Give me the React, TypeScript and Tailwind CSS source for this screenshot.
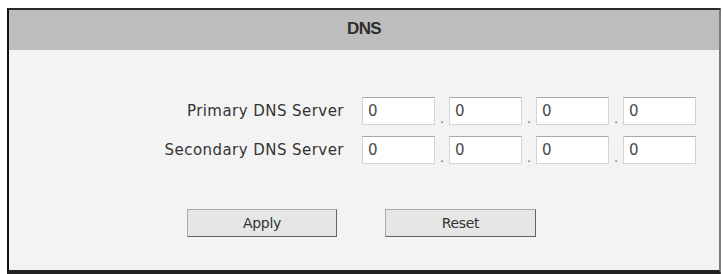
import React from "react";

const ROWS = [
  { label: "Primary DNS Server", values: ["0", "0", "0", "0"] },
  { label: "Secondary DNS Server", values: ["0", "0", "0", "0"] },
];

function IpInput({ values }: { values: string[] }) {
  return (
    <div className="flex items-end">
      {values.map((v, i) => (
        <React.Fragment key={i}>
          {i > 0 && (
            <span className="w-[14px] text-center text-[13px] leading-[12px] text-[#666]">.</span>
          )}
          <input
            defaultValue={v}
            className="h-[28px] w-[73px] border border-[#d4d4d4] border-t-[#a9a9a9] bg-white px-[5px] text-[15px] text-[#4a4a4a] outline-none"
          />
        </React.Fragment>
      ))}
    </div>
  );
}

export default function App() {
  return (
    <div className="h-[274px] w-[723px] bg-white pl-[7px] pt-[8px] font-['DejaVu_Sans',Verdana,sans-serif]">
      <div className="flex h-[266px] w-[714px] flex-col border-l-2 border-r-2 border-t-2 border-b-4 border-l-[#111] border-r-[#7a7a7a] border-t-[#2a2a2a] border-b-[#222] bg-[#f3f3f3]">
        {/* header */}
        <div className="flex h-[40px] items-center justify-center bg-[#bdbdbd] pb-[2px] font-['Liberation_Sans',Arial,sans-serif] text-[17px] font-bold tracking-[-0.6px] text-[#2e2e2e]">
          DNS
        </div>

        {/* address rows */}
        <div className="mt-[47px] flex flex-col gap-[11px]">
          {ROWS.map((row) => (
            <div key={row.label} className="flex items-center">
              <span className="w-[353px] pr-[18px] text-right text-[15px] tracking-[0.45px] text-[#333]">{row.label}</span>
              <IpInput values={row.values} />
            </div>
          ))}
        </div>

        {/* buttons */}
        <div className="mt-[45px] flex gap-[48px] pl-[178px]">
          <button className="h-[28px] w-[150px] border border-[#aaa] border-b-[#666] border-r-[#666] bg-[#e6e6e6] text-[14px] tracking-[-0.3px] text-[#333]">
            Apply
          </button>
          <button className="h-[28px] w-[151px] border border-[#aaa] border-b-[#666] border-r-[#666] bg-[#e6e6e6] text-[14px] tracking-[-0.3px] text-[#333]">
            Reset
          </button>
        </div>
      </div>
    </div>
  );
}
